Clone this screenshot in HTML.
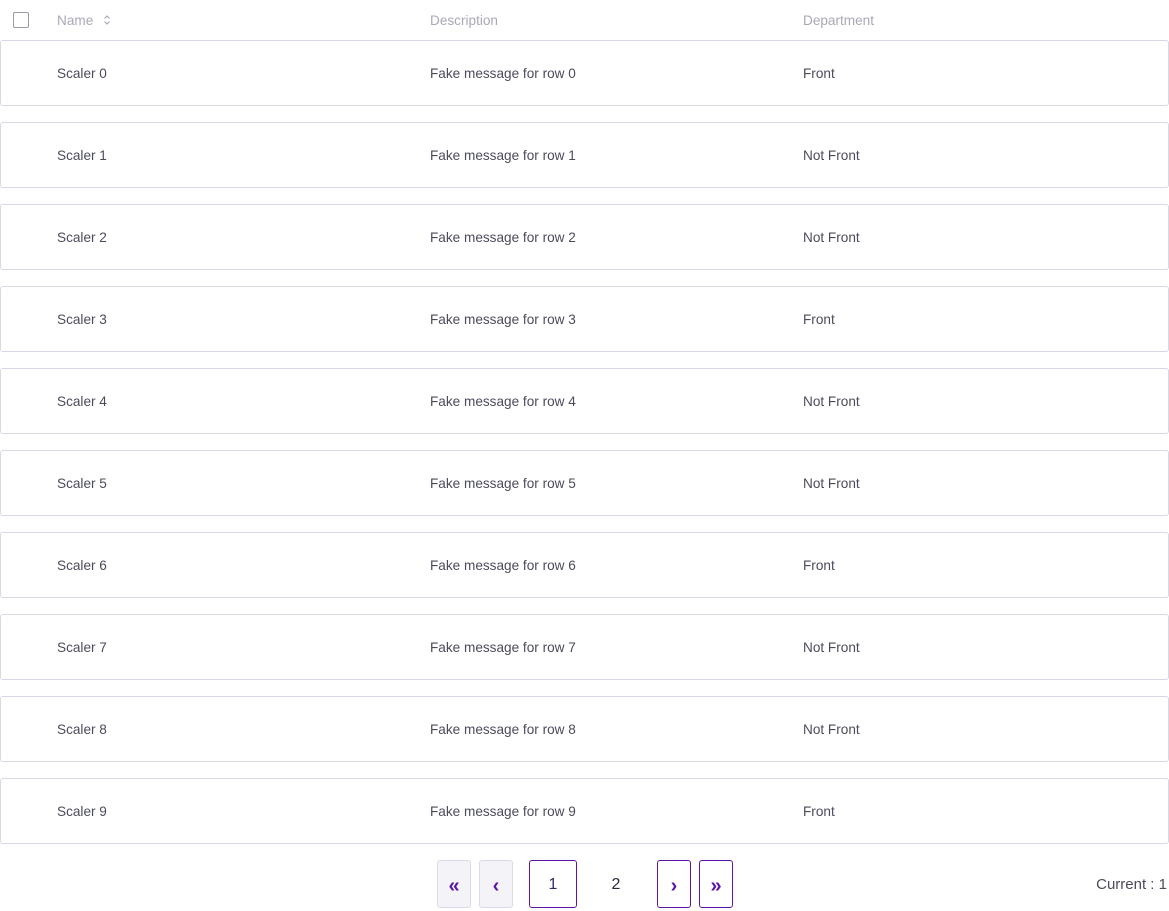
<!DOCTYPE html><html><head><style>
body{margin:0;width:1169px;height:908px;background:#fff;font-family:"Liberation Sans",sans-serif;font-size:13.6px;color:#4b4b5c;position:relative;overflow:hidden}
.a{position:absolute}
.h{color:#a8a8b8;top:13px;font-size:13.6px}
.row{position:absolute;left:0;width:1167px;height:64px;border:1px solid #d9d9e6;border-radius:3px}
.row span{position:absolute;top:25px}
.b{position:absolute;top:860px;height:46px;border:1px solid #5c14a8;border-radius:3px;box-sizing:content-box;color:#5c14a8;text-align:center;line-height:50px;font-size:20px;font-weight:bold}
.d{background:#f4f4f8;border-color:#d9d9e8}
</style></head><body>
<div class="a" style="left:13px;top:12px;width:14px;height:14px;border:1.5px solid #9a9aa8;border-radius:2px"></div>
<div class="a h" style="left:57px">Name</div>
<svg class="a" style="left:103px;top:14px" width="8" height="12" viewBox="0 0 8 12"><path d="M1.5 4.5 4 2 6.5 4.5M1.5 7.5 4 10 6.5 7.5" fill="none" stroke="#a8a8b8" stroke-width="1.2"/></svg>
<div class="a h" style="left:430px">Description</div>
<div class="a h" style="left:803px">Department</div>
<div class="row" style="top:40px"><span style="left:56px">Scaler 0</span><span style="left:429px">Fake message for row 0</span><span style="left:802px">Front</span></div>
<div class="row" style="top:122px"><span style="left:56px">Scaler 1</span><span style="left:429px">Fake message for row 1</span><span style="left:802px">Not Front</span></div>
<div class="row" style="top:204px"><span style="left:56px">Scaler 2</span><span style="left:429px">Fake message for row 2</span><span style="left:802px">Not Front</span></div>
<div class="row" style="top:286px"><span style="left:56px">Scaler 3</span><span style="left:429px">Fake message for row 3</span><span style="left:802px">Front</span></div>
<div class="row" style="top:368px"><span style="left:56px">Scaler 4</span><span style="left:429px">Fake message for row 4</span><span style="left:802px">Not Front</span></div>
<div class="row" style="top:450px"><span style="left:56px">Scaler 5</span><span style="left:429px">Fake message for row 5</span><span style="left:802px">Not Front</span></div>
<div class="row" style="top:532px"><span style="left:56px">Scaler 6</span><span style="left:429px">Fake message for row 6</span><span style="left:802px">Front</span></div>
<div class="row" style="top:614px"><span style="left:56px">Scaler 7</span><span style="left:429px">Fake message for row 7</span><span style="left:802px">Not Front</span></div>
<div class="row" style="top:696px"><span style="left:56px">Scaler 8</span><span style="left:429px">Fake message for row 8</span><span style="left:802px">Not Front</span></div>
<div class="row" style="top:778px"><span style="left:56px">Scaler 9</span><span style="left:429px">Fake message for row 9</span><span style="left:802px">Front</span></div>
<div class="b d" style="left:437px;width:32px">«</div>
<div class="b d" style="left:479px;width:32px">‹</div>
<div class="b" style="left:529px;width:46px;font-weight:normal;color:#3a2a6a;font-size:16px;line-height:48px">1</div>
<div class="a" style="left:600px;top:861px;width:32px;line-height:48px;text-align:center;font-size:16px;color:#2a2a3a">2</div>
<div class="b" style="left:657px;width:32px">›</div>
<div class="b" style="left:699px;width:32px">»</div>
<div class="a" style="right:2px;top:876px;font-size:15px;color:#4b4b5c">Current : 1</div>
</body></html>
